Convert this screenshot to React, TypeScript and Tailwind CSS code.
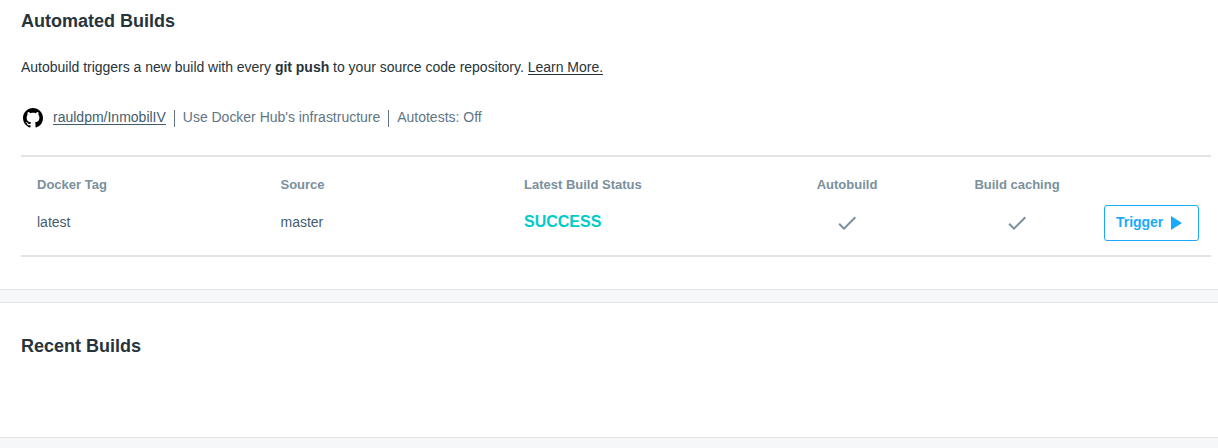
import { MdCheck } from "react-icons/md";

function GithubMark() {
  return (
    <svg viewBox="0 0 16 16" className="mt-[2px] ml-[2px] mr-[10px] h-5 w-5 fill-black">
      <path fillRule="evenodd" d="M8 0C3.58 0 0 3.58 0 8c0 3.54 2.29 6.53 5.47 7.59.4.07.55-.17.55-.38 0-.19-.01-.82-.01-1.49-2.01.37-2.53-.49-2.69-.94-.09-.23-.48-.94-.82-1.13-.28-.15-.68-.52-.01-.53.63-.01 1.08.58 1.23.82.72 1.21 1.87.87 2.33.66.07-.52.28-.87.51-1.07-1.78-.2-3.64-.89-3.64-3.95 0-.87.31-1.59.82-2.15-.08-.2-.36-1.02.08-2.12 0 0 .67-.21 2.2.82.64-.18 1.32-.27 2-.27s1.36.09 2 .27c1.53-1.04 2.2-.82 2.2-.82.44 1.1.16 1.92.08 2.12.51.56.82 1.27.82 2.15 0 3.07-1.87 3.75-3.65 3.95.29.25.54.73.54 1.48 0 1.07-.01 1.93-.01 2.2 0 .21.15.46.55.38A8.01 8.01 0 0 0 16 8c0-4.42-3.58-8-8-8z" />
    </svg>
  );
}

export default function App() {
  return (
    <main className="flex h-[448px] flex-col bg-[#f6f7f9] font-['Liberation_Sans',sans-serif] text-sm text-[#445d6e]">
      <section className="h-[290px] border-b border-[#e0e4e7] bg-white pl-[21px] pr-[7px] pt-[10px]">
        <h2 className="text-lg font-bold leading-[22px] text-[#27343b]">Automated Builds</h2>
        <p className="mt-[25px] leading-5 tracking-[-0.014px] text-[#27343b]">
          Autobuild triggers a new build with every <b>git push</b> to your source code repository.{" "}
          <a className="inline-block h-[16px] border-b border-[#27343b] leading-[16px]">Learn More.</a>
        </p>
        <div className="mt-[29px] flex h-[22px] items-center text-[#627584]">
          <GithubMark />
          <a className="h-[16px] border-b border-[#445d6e] leading-[16px] text-[#445d6e]">rauldpm/InmobilIV</a>
          <span className="mx-2 mt-[2px] h-[17px] w-px bg-[#627584]" />
          <span className="tracking-[-0.02px]">Use Docker Hub's infrastructure</span>
          <span className="mx-2 mt-[2px] h-[17px] w-px bg-[#627584]" />
          <span>Autotests: Off</span>
        </div>
        <div className="mt-[27px] h-[102px] border-y-2 border-[#e0e4e7] pt-[18px]">
          <div className="grid h-5 grid-cols-[243.5px_243.5px_238px_170px_170px_1fr] items-center pl-4 text-[13px] font-bold text-[#7a909d]">
            <span>Docker Tag</span>
            <span>Source</span>
            <span>Latest Build Status</span>
            <span className="text-center">Autobuild</span>
            <span className="text-center">Build caching</span>
          </div>
          <div className="mt-[10px] grid h-9 grid-cols-[243.5px_243.5px_238px_170px_172px_95px] items-center pl-4">
            <span className="-mt-0.5">latest</span>
            <span className="-mt-0.5">master</span>
            <span className="-mt-0.5 text-base font-bold text-[#00cbca]">SUCCESS</span>
            <MdCheck className="ml-[73px] text-2xl text-[#7a909d]" />
            <MdCheck className="ml-[73px] text-2xl text-[#7a909d]" />
            <button className="flex h-9 w-[95px] items-center rounded-[3px] border border-[#1aaaf8] pl-[11px] font-bold text-[#1aaaf8]">
              <span className="-mt-0.5 tracking-[-0.05px]">Trigger</span>
              <svg viewBox="0 0 11 14" className="ml-2 h-[14px] w-[11px] fill-current"><path d="M0 0 11 7 0 14z" /></svg>
            </button>
          </div>
        </div>
      </section>
      <section className="mt-3 h-[136px] border-y border-[#e0e4e7] bg-white pl-[21px] pt-8">
        <h2 className="text-lg font-bold leading-[22px] text-[#27343b]">Recent Builds</h2>
      </section>
    </main>
  );
}
